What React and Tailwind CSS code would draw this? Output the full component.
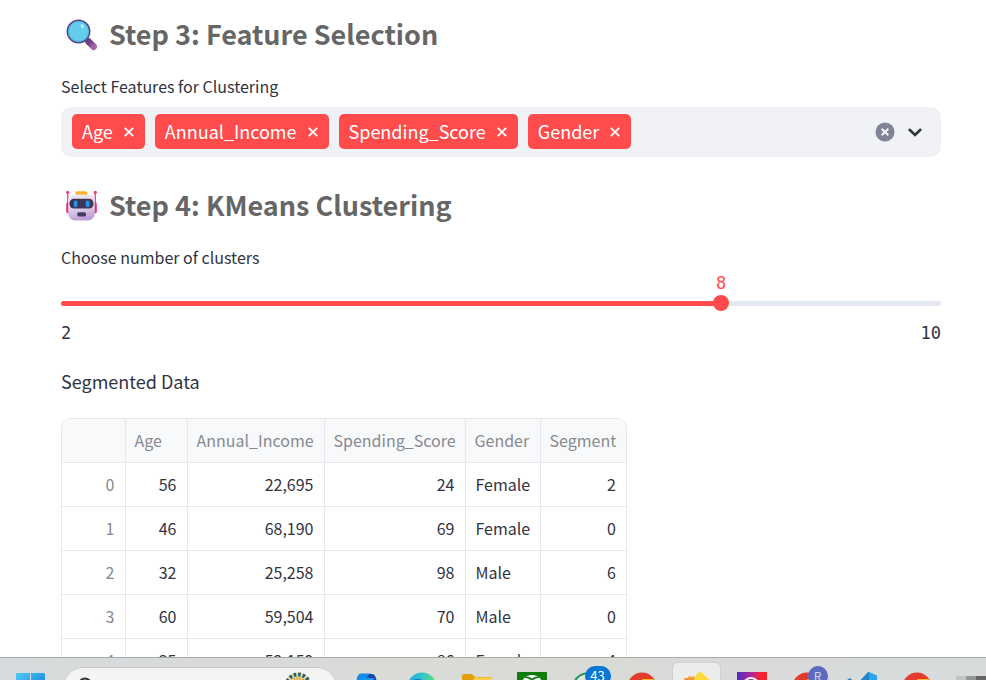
import { useState } from "react";

const COLUMNS = ["Age", "Annual_Income", "Spending_Score", "Gender", "Segment"];

const ROWS = [
  [56, 22695, 24, "Female", 2],
  [46, 68190, 69, "Female", 0],
  [32, 25258, 98, "Male", 6],
  [60, 59504, 70, "Male", 0],
  [35, 52159, 86, "Female", 4],
];

const MIN = 2;
const MAX = 10;

function MagnifierIcon() {
  return (
    <svg viewBox="0 0 32 32" className="size-8 shrink-0" aria-hidden="true">
      <defs>
        <linearGradient id="handle" x1="0" y1="0" x2="1" y2="1">
          <stop offset="0" stopColor="#6b3f86" />
          <stop offset="0.5" stopColor="#8f4c90" />
          <stop offset="1" stopColor="#a368a8" />
        </linearGradient>
      </defs>
      <path d="M19 19l4 4" stroke="#5a4a86" strokeWidth="3" />
      <path d="M22.6 22.6l5 5" stroke="url(#handle)" strokeWidth="6.8" strokeLinecap="round" />
      <circle cx="12.5" cy="12.5" r="11.2" fill="#63cdeb" stroke="#54457f" strokeWidth="1.5" />
      <circle cx="12.5" cy="12.5" r="10" fill="none" stroke="#4fa8dc" strokeWidth="0.8" />
      <ellipse cx="16.4" cy="7.2" rx="1.5" ry="2.1" fill="#b5ecf8" transform="rotate(-30 16.4 7.2)" />
    </svg>
  );
}

function RobotIcon() {
  return (
    <svg viewBox="0 0 32 32" className="size-8 shrink-0" aria-hidden="true">
      <defs>
        <linearGradient id="face" x1="0" y1="0" x2="0.2" y2="1">
          <stop offset="0" stopColor="#efe9f4" />
          <stop offset="0.6" stopColor="#ddd0ea" />
          <stop offset="1" stopColor="#bf9fda" />
        </linearGradient>
        <linearGradient id="visor" x1="0" y1="0" x2="1" y2="0">
          <stop offset="0" stopColor="#3a3153" />
          <stop offset="1" stopColor="#463a5c" />
        </linearGradient>
      </defs>
      <path d="M1.700 2v14M29.3 2v14" stroke="#f2478a" strokeWidth="1.4" />
      <circle cx="1.700" cy="2.3" r="1.6" fill="#f4397c" />
      <circle cx="29.3" cy="2.3" r="1.6" fill="#f4397c" />
      <rect x="0.2" y="12" width="5" height="11.5" rx="2" fill="#f02f72" />
      <rect x="25.800" y="12" width="5" height="11.5" rx="2" fill="#f02f72" />
      <rect x="9.500" y="1.2" width="12" height="5" rx="2" fill="#f9b52b" />
      <rect x="2.2" y="4.5" width="26.6" height="26" rx="7" fill="url(#face)" />
      <rect x="3.500" y="8.800" width="24" height="9.800" rx="4.5" fill="url(#visor)" />
      <rect x="7.800" y="10.4" width="3.6" height="6.6" rx="1.6" fill="#2297ee" />
      <rect x="19.800" y="10.4" width="3.6" height="6.6" rx="1.6" fill="#2297ee" />
      <rect x="11.2" y="22.2" width="8.800" height="4.2" rx="1.6" fill="#453b5c" />
    </svg>
  );
}

function StepHeading({ icon, children }) {
  return (
    <h2 className="flex items-center gap-[11px] pl-[5px] text-[27px] leading-8 font-bold text-[#666666]">
      {icon}
      <span className="pb-0.5">{children}</span>
    </h2>
  );
}

function Tag({ name, onRemove }) {
  return (
    <span className="flex h-[35px] items-center gap-[11px] rounded-[5px] bg-[#ff4b4b] pr-[11px] pl-2.5 text-[18px] text-white">
      {name}
      <button type="button" aria-label={`Remove ${name}`} onClick={onRemove}>
        <svg viewBox="0 0 10 10" className="size-2.5" fill="none" stroke="currentColor" strokeWidth="1.8">
          <path d="M0.8 0.8l8.4 8.4M9.2 0.8l-8.4 8.4" />
        </svg>
      </button>
    </span>
  );
}

function FeatureSelect() {
  const [tags, setTags] = useState(["Age", "Annual_Income", "Spending_Score", "Gender"]);
  return (
    <div className="mt-[9px] flex min-h-[50px] items-center rounded-[10px] bg-[#f0f2f6] pr-4 pb-px pl-[11px]">
      <div className="flex flex-wrap gap-2.5">
        {tags.map((t) => (
          <Tag key={t} name={t} onRemove={() => setTags(tags.filter((x) => x !== t))} />
        ))}
      </div>
      <input id="features" type="text" className="h-8 min-w-0 flex-1 bg-transparent outline-none" />
      <button type="button" aria-label="Clear all" onClick={() => setTags([])}>
        <svg viewBox="0 0 20 20" className="size-5">
          <circle cx="10" cy="10" r="9.5" fill="#808495" />
          <path d="M6.7 6.7l6.6 6.6M13.3 6.7l-6.6 6.6" stroke="#f0f2f6" strokeWidth="2.1" />
        </svg>
      </button>
      <button type="button" aria-label="Open" className="ml-2.5">
        <svg viewBox="0 0 20 20" className="size-5" fill="none" stroke="#31333f" strokeWidth="2.6">
          <path d="M4.6 7.8l5.4 5.2 5.4-5.2" strokeLinecap="round" />
        </svg>
      </button>
    </div>
  );
}

function ClusterSlider() {
  const [value, setValue] = useState(8);
  const percent = ((value - MIN) / (MAX - MIN)) * 100;
  return (
    <div className="font-['DejaVu_Sans_Mono',monospace] text-[17px] leading-5">
      <div className="mt-1" style={{ paddingLeft: `${percent}%` }}>
        <output htmlFor="clusters" className="-ml-[5px] block w-[11px] text-[#ff4b4b]">
          {value}
        </output>
      </div>
      <div className="grid h-5 items-center">
        <div className="h-[5px] overflow-hidden rounded-full bg-[#e4e8f0] [grid-area:1/1]">
          <div className="h-full bg-[#ff4b4b]" style={{ width: `${percent}%` }} />
        </div>
        <input
          id="clusters"
          type="range"
          min={MIN}
          max={MAX}
          value={value}
          onChange={(e) => setValue(Number(e.target.value))}
          className="-mx-2 h-4 w-[calc(100%+16px)] appearance-none bg-transparent [grid-area:1/1] [&::-webkit-slider-thumb]:size-4 [&::-webkit-slider-thumb]:appearance-none [&::-webkit-slider-thumb]:rounded-full [&::-webkit-slider-thumb]:bg-[#ff4b4b]"
        />
      </div>
      <div className="mt-2.5 flex justify-between">
        <span>{MIN}</span>
        <span>{MAX}</span>
      </div>
    </div>
  );
}

function DataTable() {
  return (
    <div className="mt-[23px] w-[566px] shrink-0 overflow-hidden rounded-[10px] border border-[#e6e7ea]">
      <table className="w-full table-fixed border-collapse text-[16px] leading-5">
        <colgroup>
          <col className="w-[63px]" />
          <col className="w-[62px]" />
          <col className="w-[137px]" />
          <col className="w-[141px]" />
          <col className="w-[75px]" />
          <col />
        </colgroup>
        <thead>
          <tr className="h-[43px] bg-[#f8f9fb] text-left text-[#87898f]">
            <th className="border-r border-b border-[#e6e7ea]" aria-label="Index" />
            {COLUMNS.map((c) => (
              <th key={c} scope="col" className="border-r border-b border-[#e6e7ea] px-[9px] font-normal last:border-r-0">
                {c}
              </th>
            ))}
          </tr>
        </thead>
        <tbody>
          {ROWS.map((row, i) => (
            <tr key={i} className="h-11">
              <th scope="row" className="border-r border-b border-[#e6e7ea] px-2.5 text-right font-normal text-[#87898f]">
                {i}
              </th>
              {row.map((cell, j) => (
                <td
                  key={j}
                  className={`border-r border-b border-[#e6e7ea] px-2.5 last:border-r-0 ${
                    typeof cell === "number" ? "text-right" : "text-left"
                  }`}
                >
                  {cell.toLocaleString("en-US")}
                </td>
              ))}
            </tr>
          ))}
        </tbody>
      </table>
    </div>
  );
}

function Chrome() {
  return (
    <svg viewBox="0 0 30 30" className="size-[30px]">
      <circle cx="15" cy="15" r="14.5" fill="#e33b2e" />
      <path d="M15 7h11.500A14.5 14.5 0 0 1 15 29.5l6-11z" fill="#fbbc1a" />
      <path d="M2.4 7.8A14.5 14.5 0 0 0 15 29.5l5-9-11-2z" fill="#2da14c" />
      <circle cx="15" cy="15" r="7" fill="#fff" />
      <circle cx="15" cy="15" r="5.5" fill="#3f7de8" />
    </svg>
  );
}

const APPS = [
  {
    name: "Copilot",
    icon: (
      <svg viewBox="0 0 30 30" className="size-[30px]">
        <path d="M9 2h11q2.5 0 3.5 3l3 9H14z" fill="#1546a8" />
        <path d="M9 1.5h10c-4 1-4.500 6-6.500 13L9 27H3Q0 27 1.500 21L5 6q1-4.500 4-4.500z" fill="#168ae6" />
        <path d="M11 6h11l-5 20H5z" fill="#1597f2" />
      </svg>
    ),
  },
  {
    name: "Edge",
    icon: (
      <svg viewBox="0 0 30 30" className="size-[30px]">
        <defs>
          <linearGradient id="edge" x1="0" x2="1">
            <stop offset="0" stopColor="#20a8e0" />
            <stop offset="0.5" stopColor="#2fc5cc" />
            <stop offset="1" stopColor="#66e06a" />
          </linearGradient>
        </defs>
        <circle cx="15" cy="15" r="14.500" fill="url(#edge)" />
        <path d="M1 13C4 7 12 5 17 9c-5 0-6 5-5 9 1 5 6 9 12 8A14.500 14.500 0 0 1 1 13z" fill="#1473c8" />
      </svg>
    ),
  },
  {
    name: "File Explorer",
    icon: (
      <svg viewBox="0 0 30 30" className="size-[30px]">
        <path d="M0 4q0-2 2-2h8l3 3h15q2 0 2 2v8H0z" fill="#e0a010" />
        <path d="M0 9h10l3-3.500h17V25H0z" fill="#ffd04d" />
      </svg>
    ),
  },
  {
    name: "Xbox",
    icon: (
      <svg viewBox="0 0 30 30" className="size-[30px]">
        <rect width="30" height="30" rx="1" fill="#107c10" />
        <circle cx="15" cy="14" r="11" fill="#fff" />
        <path d="M9 4.500q3-.5 6 2 3-2.500 6-2l1 1.500q-4 0-7 3-3-3-7-3z" fill="#107c10" />
        <path d="M15 9q7 5 9 14H6Q8 14 15 9z" fill="#107c10" />
      </svg>
    ),
  },
  {
    name: "WhatsApp",
    icon: (
      <svg viewBox="0 0 30 30" className="size-[30px]">
        <circle cx="15" cy="15" r="13.500" fill="#dfe6de" stroke="#1f9461" strokeWidth="2" />
      </svg>
    ),
    badge: (
      <span className="absolute -top-1.5 left-[13px] flex h-5 w-[26px] items-center justify-center rounded-full bg-[#0878d4] text-[13px] leading-5 text-white">
        43
      </span>
    ),
  },
  { name: "Chrome", icon: <Chrome /> },
  {
    name: "Paint",
    active: true,
    icon: (
      <svg viewBox="0 0 30 30" className="size-[30px]">
        <path d="M11 7l5-6q2-2 4 0l8 7-5 8z" fill="#ffd83a" />
        <path d="M2 6l4 0 1-2 3 1 2-1 1 12H4z" fill="#f59a2c" />
        <path d="M4 7l3 1 2 7H5z" fill="#c472b4" />
      </svg>
    ),
  },
  {
    name: "Photos",
    icon: (
      <svg viewBox="0 0 30 30" className="size-[30px]">
        <defs>
          <linearGradient id="photos">
            <stop offset="0" stopColor="#4a2ec0" />
            <stop offset="0.5" stopColor="#b82494" />
            <stop offset="0.8" stopColor="#f5242c" />
          </linearGradient>
        </defs>
        <rect width="30" height="30" fill="url(#photos)" />
        <circle cx="14" cy="14" r="8" fill="none" stroke="#fff" strokeWidth="2" />
      </svg>
    ),
  },
  {
    name: "Chrome profile",
    icon: <Chrome />,
    badge: (
      <span className="absolute -top-1.5 left-4 flex size-5 items-center justify-center rounded-full bg-[#5c6bc0] text-[12px] leading-5 text-[#d4d8f0]">
        R
      </span>
    ),
  },
  {
    name: "VS Code",
    icon: (
      <svg viewBox="0 0 30 30" className="size-[30px]">
        <path d="M21 0l3 1v12H9z" fill="#1c85cb" />
        <path d="M22 0l8 3.500V27l-8 3z" fill="#2ba6ee" />
        <path d="M0 8l3-2 8 8-3 3z" fill="#1687cf" />
      </svg>
    ),
  },
  { name: "Chrome", icon: <Chrome /> },
];

function Taskbar() {
  return (
    <footer className="flex h-[23px] shrink-0 items-start overflow-hidden border-t border-[#a9aaa9] bg-linear-to-r from-[#d7dbdd] via-[#dadbd6] to-[#d7dbdc]">
      <button type="button" aria-label="Start" className="mt-[15px] ml-4 shrink-0">
        <svg viewBox="0 0 29 29" className="size-[29px]">
          <defs>
            <linearGradient id="start" x1="0" y1="0" x2="1" y2="1">
              <stop offset="0" stopColor="#4fcaf8" />
              <stop offset="1" stopColor="#0672cf" />
            </linearGradient>
          </defs>
          <path d="M1 0h13v14H0V1zM15 0h13l1 1v13H15zM0 15h14v14H0zM15 15h14v14H15z" fill="url(#start)" />
        </svg>
      </button>
      <button
        type="button"
        aria-label="Search"
        className="mt-[9px] ml-[18px] flex h-10 w-[274px] shrink-0 items-start justify-between rounded-full border border-[#c9cac8] bg-[#f4f4f3] pr-6 pl-3.5"
      >
        <svg viewBox="0 0 16 16" className="mt-[9px] size-4" fill="none" stroke="#333" strokeWidth="2.200">
          <circle cx="7" cy="7" r="5.500" />
          <path d="M11 11l4 4" />
        </svg>
        <svg viewBox="0 0 28 28" className="mt-1 size-7">
          <circle cx="14" cy="14" r="13.500" fill="#f0dc9a" />
          <circle cx="14" cy="14" r="11.500" fill="none" stroke="#1d6478" strokeWidth="4" strokeDasharray="2.600 1.900" />
          <circle cx="14" cy="14" r="7.500" fill="none" stroke="#d9a03c" strokeWidth="3" strokeDasharray="1.600 1.200" />
          <circle cx="14" cy="14" r="5" fill="#a63a2a" />
        </svg>
      </button>
      <div className="ml-0.5 flex">
        {APPS.map((app, i) => (
          <button
            key={i}
            type="button"
            aria-label={app.name}
            className="flex w-[55px] shrink-0 justify-center pt-1"
          >
            <span
              className={`flex h-12 w-[49px] justify-center rounded-md border pt-[9px] ${
                app.active ? "border-[#d0d0ce] bg-[#ececea]" : "border-transparent"
              }`}
            >
              <span className="relative size-[30px]">
                {app.icon}
                {app.badge}
              </span>
            </span>
          </button>
        ))}
      </div>
      <svg viewBox="0 0 30 12" className="mt-[18px] ml-3 h-3 w-[30px] shrink-0" aria-hidden="true">
        <path d="M0 0h10v12H0z" fill="#c3c4c4" />
        <path d="M10 0h10v12H10z" fill="#969696" />
        <path d="M20 0h10v12H20z" fill="#666" />
      </svg>
    </footer>
  );
}

export default function App() {
  return (
    <div className="flex h-screen flex-col overflow-hidden bg-white font-['Noto_Sans_CJK_SC',sans-serif] text-[#31333f]">
      <main className="min-h-0 flex-1 overflow-hidden pt-[18px] pr-[45px] pl-[61px]">
        <StepHeading icon={<MagnifierIcon />}>Step 3: Feature Selection</StepHeading>
        <label htmlFor="features" className="mt-[22px] block text-[16px] leading-6">
          Select Features for Clustering
        </label>
        <FeatureSelect />
        <div className="mt-8">
          <StepHeading icon={<RobotIcon />}>Step 4: KMeans Clustering</StepHeading>
        </div>
        <label htmlFor="clusters" className="mt-[22px] block text-[16px] leading-6">
          Choose number of clusters
        </label>
        <ClusterSlider />
        <p className="mt-6 text-[18px] leading-7">Segmented Data</p>
        <DataTable />
      </main>
      <Taskbar />
    </div>
  );
}
